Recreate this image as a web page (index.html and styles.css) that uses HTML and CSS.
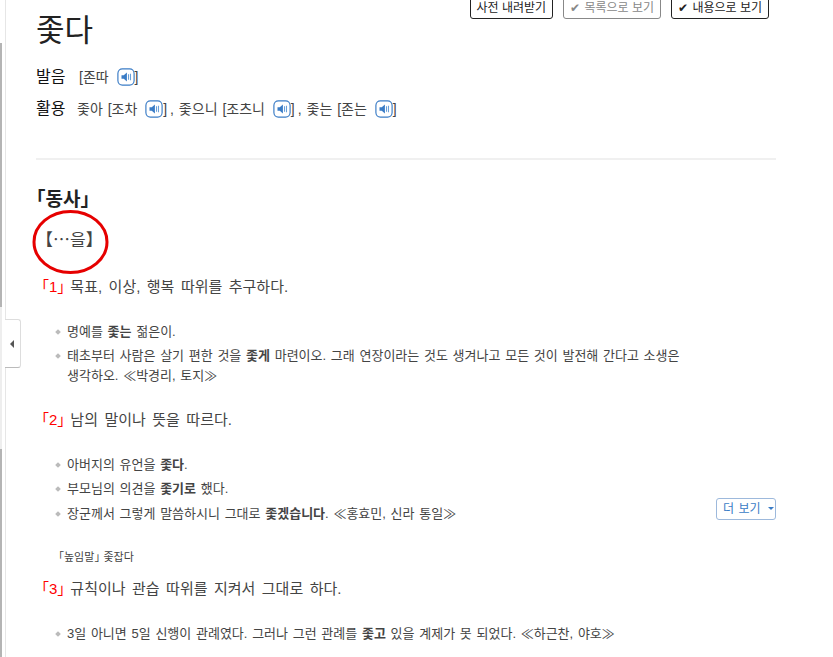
FILE: index.html
```html
<!DOCTYPE html>
<html lang="ko">
<head>
    <meta charset="UTF-8">
    <title>좇다</title>
    <link rel="stylesheet" href="styles.css">
</head>
<body>

    <div class="side-rail">
        <div class="scroll-thumb-top"></div>
        <div class="scroll-gap"></div>
        <div class="scroll-thumb-bottom"></div>
    </div>
    <button class="side-toggle"></button>

    <div class="content">
        <div class="top-buttons">
            <a class="btn">사전 내려받기</a>
            <a class="btn btn-off"><span class="check">✔</span> 목록으로 보기</a>
            <a class="btn"><span class="check">✔</span> 내용으로 보기</a>
        </div>

        <h1>좇다</h1>

        <div class="info-row">
            <span class="info-label">발음</span>
            <span class="info-text info-first">[존따 <svg class="sound" viewBox="0 0 20 20"><use href="#snd"/></svg>]</span>
        </div>
        <div class="info-row">
            <span class="info-label">활용</span>
            <span class="info-text">좇아 [조차 <svg class="sound" viewBox="0 0 20 20"><use href="#snd"/></svg>]<span class="sep">,</span> 좇으니 [조츠니 <svg class="sound" viewBox="0 0 20 20"><use href="#snd"/></svg>]<span class="sep">,</span> 좇는 [존는 <svg class="sound" viewBox="0 0 20 20"><use href="#snd"/></svg>]</span>
        </div>

        <hr class="divider">

        <h2>「동사」</h2>

        <div class="pattern-wrap">
            <span class="pattern">【⋯을】</span>
            <svg class="circle" viewBox="0 0 78 66"><ellipse cx="38.500" cy="33" rx="36.500" ry="30.500"/></svg>
        </div>

        <p class="sense"><span class="num">「1」</span>목표, 이상, 행복 따위를 추구하다.</p>
        <ul class="examples">
            <li>명예를 <b>좇는</b> 젊은이.</li>
            <li>태초부터 사람은 살기 편한 것을 <b>좇게</b> 마련이오. 그래 연장이라는 것도 생겨나고 모든 것이 발전해 간다고 소생은 생각하오. ≪박경리, 토지≫</li>
        </ul>

        <p class="sense"><span class="num">「2」</span>남의 말이나 뜻을 따르다.</p>
        <ul class="examples">
            <li>아버지의 유언을 <b>좇다</b>.</li>
            <li>부모님의 의견을 <b>좇기로</b> 했다.</li>
            <li>장군께서 그렇게 말씀하시니 그대로 <b>좇겠습니다</b>. ≪홍효민, 신라 통일≫<a class="more">더 보기<i class="caret"></i></a></li>
        </ul>
        <p class="honor">「높임말<span class="honor-close">」</span> 좇잡다</p>

        <p class="sense sense-after-honor"><span class="num">「3」</span>규칙이나 관습 따위를 지켜서 그대로 하다.</p>
        <ul class="examples">
            <li>3일 아니면 5일 신행이 관례였다. 그러나 그런 관례를 <b>좇고</b> 있을 계제가 못 되었다. ≪하근찬, 야호≫</li>
        </ul>
    </div>

    <svg class="defs" width="0" height="0">
        <symbol id="snd" viewBox="0 0 20 20">
            <rect x="1" y="1" width="18" height="18" rx="5" fill="#fff" stroke="#3a7cc6" stroke-width="1.300"/>
            <path d="M5 8h2.500L11 5v10l-3.500-3H5z" fill="#3a7cc6"/>
            <path d="M12.800 7v6M15 6.500v7" stroke="#6aa0d8" stroke-width="1.200" fill="none"/>
        </symbol>
    </svg>

</body>
</html>
```

FILE: styles.css
```css
html, body {
    margin: 0;
    height: 100%;
    overflow: hidden;
}
body {
    font-family: "Liberation Sans", "Noto Sans CJK KR", sans-serif;
    background-color: #fff;
    color: #333;
    font-size: 14px;
    display: flex;
    text-spacing-trim: space-all;
}
.side-rail {
    width: 5px;
    height: 657px;
    border-right: 1px solid #e6e6e6;
    display: flex;
    flex-direction: column;
    flex-shrink: 0;
}
.scroll-thumb-top {
    margin-top: 43px;
    height: 264px;
    width: 2px;
    background-color: #b4b4b4;
}
.scroll-gap {
    height: 142px;
    width: 2px;
    background-color: #eee;
}
.scroll-thumb-bottom {
    flex: 1;
    width: 2px;
    background-color: #b4b4b4;
}
.side-toggle {
    position: absolute;
    left: 5px;
    top: 319px;
    width: 16px;
    height: 49px;
    padding: 0;
    background-color: #fff;
    border: 1px solid #ddd;
    border-bottom-color: #bbb;
    border-left: none;
    border-radius: 0 3px 3px 0;
}
.side-toggle::after {
    content: "";
    display: block;
    margin-left: 5px;
    width: 0;
    height: 0;
    border-top: 4px solid transparent;
    border-bottom: 4px solid transparent;
    border-right: 4px solid #555;
}
.content {
    width: 740px;
    margin-left: 30px;
    position: relative;
}
.top-buttons {
    display: flex;
    justify-content: flex-end;
    gap: 10px;
    margin-top: -6px;
    margin-right: 7px;
}
.btn {
    font-size: 12px;
    line-height: 17px;
    padding: 5px 6px 1px;
    border: 1px solid #222;
    border-radius: 3px;
    color: #222;
    background-color: #fff;
}
.btn-off {
    color: #888;
    border-color: #888;
}
.check {
    font-size: 12px;
    margin: 0 1px 0 0;
}
h1 {
    font-size: 31px;
    font-weight: normal;
    color: #222;
    margin: -11px 0 7px 0;
    line-height: 46px;
}
.info-row {
    line-height: 32px;
    display: flex;
}
.info-label {
    font-size: 16px;
    color: #111;
    width: 41px;
}
.info-first {
    margin-left: 2px;
}
.info-text {
    font-size: 14px;
    color: #444;
    word-spacing: 1px;
}
.sep {
    margin-left: 3px;
}
.sound {
    width: 18px;
    height: 18px;
    vertical-align: -4px;
    margin-left: 3px;
}
.divider {
    border: none;
    border-top: 2px solid #f0f0f0;
    margin: 33px 0 0 0;
}
h2 {
    font-size: 19px;
    color: #222;
    margin: 28px 0 0 0;
    line-height: 24px;
    text-spacing-trim: trim-start;
}
.pattern-wrap {
    position: relative;
    margin: 17px 0 0 0;
    line-height: 24px;
    height: 24px;
}
.pattern {
    font-size: 17px;
    color: #444;
}
.circle {
    position: absolute;
    left: -4px;
    top: -20px;
    width: 78px;
    height: 66px;
}
.circle ellipse {
    fill: none;
    stroke: #e60000;
    stroke-width: 3;
}
.sense {
    font-size: 15px;
    color: #444;
    margin: 22px 0 0 0;
    line-height: 24px;
    word-spacing: 2.300px;
}
.sense-after-honor {
    margin-top: 12px;
}
.num {
    color: #f00;
    margin: 0 -2px 0 -2px;
}
.examples {
    list-style: none;
    margin: 22.500px 0 0 31px;
    padding: 0;
    width: 625px;
    font-size: 13px;
    color: #444;
    word-spacing: 1.100px;
}
.examples li {
    position: relative;
    line-height: 20px;
    margin-bottom: 4.500px;
}
.examples li::before {
    content: "";
    position: absolute;
    left: -11px;
    top: 8px;
    width: 4px;
    height: 4px;
    background-color: #bbb;
    transform: rotate(45deg);
}
.more {
    position: absolute;
    left: 649px;
    top: -6px;
    display: flex;
    align-items: center;
    width: 60px;
    height: 22px;
    box-sizing: border-box;
    padding-left: 6px;
    font-size: 12px;
    color: #3a7cc6;
    border: 1px solid #9db9dc;
    border-radius: 3px;
}
.caret {
    margin-left: 7px;
    width: 0;
    height: 0;
    border-left: 3px solid transparent;
    border-right: 3px solid transparent;
    border-top: 3px solid #3a7cc6;
}
.honor {
    font-size: 11px;
    color: #444;
    margin: 25.500px 0 0 17px;
    line-height: 16px;
}
.honor-close {
    letter-spacing: -5px;
}
.defs {
    position: absolute;
}
```
